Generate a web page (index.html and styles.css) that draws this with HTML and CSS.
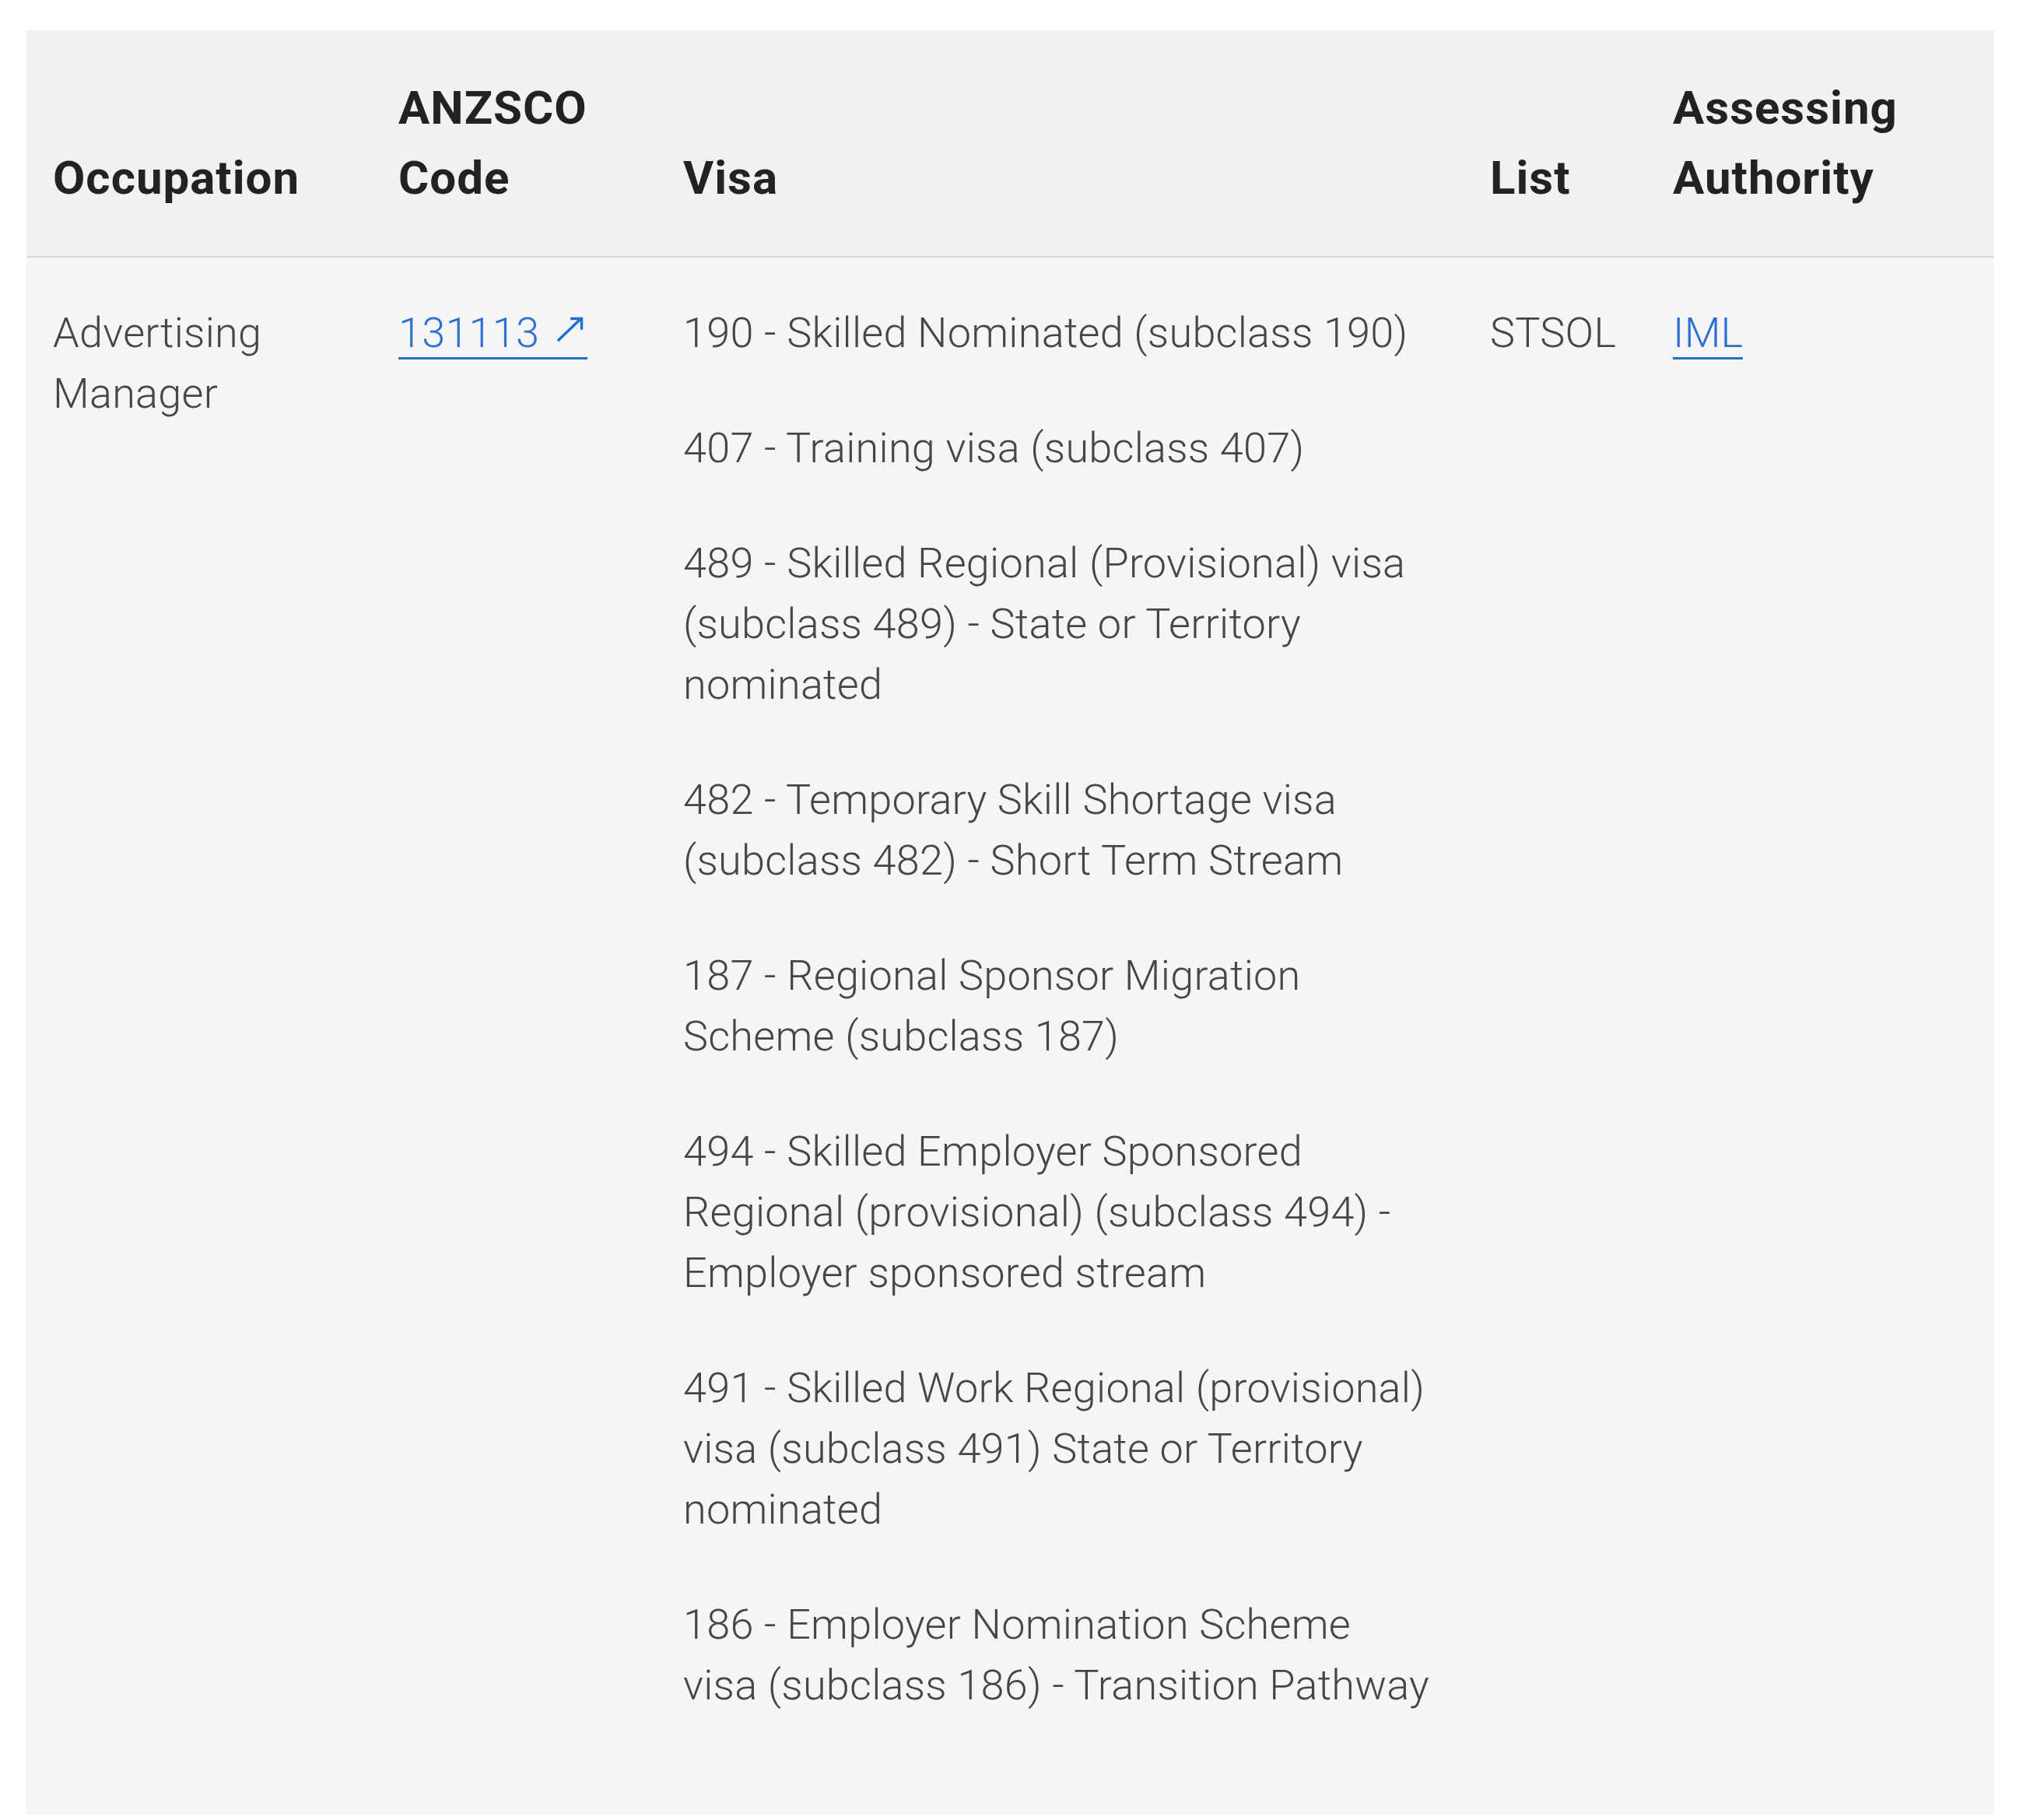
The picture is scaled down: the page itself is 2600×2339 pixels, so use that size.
FILE: index.html
```html
<!DOCTYPE html>
<html lang="en">
<head>
<meta charset="utf-8">
<title>Occupation list</title>
<link rel="stylesheet" href="styles.css">
</head>
<body>
<div class="page">
  <table class="occ-table">
    <colgroup>
      <col class="col-occ">
      <col class="col-code">
      <col class="col-visa">
      <col class="col-list">
      <col class="col-auth">
    </colgroup>
    <thead>
      <tr>
        <th>Occupation</th>
        <th>ANZSCO Code</th>
        <th>Visa</th>
        <th>List</th>
        <th>Assessing Authority</th>
      </tr>
    </thead>
    <tbody>
      <tr>
        <td>Advertising Manager</td>
        <td><a class="link" href="#">131113 <svg class="ext" viewBox="0 0 16 16" aria-hidden="true"><path d="M3.3 13.3 L13.2 3.8 M8.7 3.8 H13.5 V8.6" fill="none" stroke="currentColor" stroke-width="1.15"/></svg></a></td>
        <td class="visa-cell">
          <p class="visa">190 - Skilled Nominated (subclass 190)</p>
          <p class="visa">407 - Training visa (subclass 407)</p>
          <p class="visa">489 - Skilled Regional (Provisional) visa (subclass 489) - State or Territory nominated</p>
          <p class="visa">482 - Temporary Skill Shortage visa (subclass 482) - Short Term Stream</p>
          <p class="visa">187 - Regional Sponsor Migration Scheme (subclass 187)</p>
          <p class="visa">494 - Skilled Employer Sponsored Regional (provisional) (subclass 494) - Employer sponsored stream</p>
          <p class="visa">491 - Skilled Work Regional (provisional) visa (subclass 491) State or Territory nominated</p>
          <p class="visa">186 - Employer Nomination Scheme visa (subclass 186) - Transition Pathway</p>
        </td>
        <td>STSOL</td>
        <td><a class="link" href="#">IML</a></td>
      </tr>
    </tbody>
  </table>
</div>
</body>
</html>
```
FILE: styles.css
```css
html, body {
  margin: 0;
  padding: 0;
  background: #ffffff;
}

.page {
  padding: 39px 37px 0 34px;
}

.occ-table {
  width: 2529px;
  table-layout: fixed;
  border-collapse: collapse;
  border-spacing: 0;
  font-family: Roboto, "Liberation Sans", sans-serif;
}

.col-occ { width: 444px; }
.col-code { width: 366px; }
.col-visa { width: 1037px; }
.col-list { width: 235px; }
.col-auth { width: 447px; }

.occ-table thead th {
  background: #f1f1f1;
  color: #222222;
  font-size: 60px;
  line-height: 90px;
  font-weight: 700;
  letter-spacing: 1px;
  text-align: left;
  vertical-align: bottom;
  padding: 55px 36px 55px 34px;
  border-bottom: 2px solid #d8d8d8;
}

.occ-table tbody td {
  background: #f5f5f6;
  color: #464646;
  font-size: 54px;
  line-height: 78px;
  font-weight: 300;
  letter-spacing: 0.25px;
  vertical-align: top;
  padding: 58px 36px 57px 34px;
}

.occ-table tbody td.visa-cell {
  padding-right: 44px;
}

.visa {
  margin: 0 0 70px;
}

.link {
  color: #2b6fd3;
  text-decoration: none;
  border-bottom: 3px solid #1b74c5;
}

.ext {
  width: 48px;
  height: 48px;
  vertical-align: baseline;
  color: #1d6fd0;
}
```
